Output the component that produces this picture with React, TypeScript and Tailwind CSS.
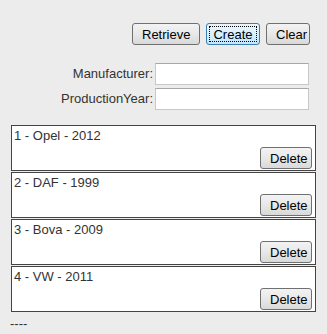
import React from 'react';

const cars = [
  { id: 1, name: 'Opel', year: 2012 },
  { id: 2, name: 'DAF', year: 1999 },
  { id: 3, name: 'Bova', year: 2009 },
  { id: 4, name: 'VW', year: 2011 },
];

const btn =
  'h-[22px] rounded-[3px] border border-[#707070] bg-gradient-to-b from-[#f3f3f3] via-[#e8e8e8] to-[#d9d9d9] px-[9px] text-[13px] leading-none text-black';

const App: React.FC = () => {
  return (
    <div className="w-[327px] h-[334px] bg-[#ececec] font-['Liberation_Sans',Arial,sans-serif] text-[13px] text-[#333]">
      {/* Actions */}
      <div className="flex justify-end gap-[6px] pt-[23px] pr-[17px]">
        <button className={`${btn} w-[68px]`}>Retrieve</button>
        <button className="h-[22px] w-[54px] rounded-[3px] border border-[#3c7fb1] bg-gradient-to-b from-[#eaf6fd] via-[#d9f0fc] to-[#bee6fd] p-[2px] text-[13px] leading-none text-black">
          <span className="flex h-full w-full items-center justify-center border border-dotted border-black">Create</span>
        </button>
        <button className={`${btn} w-[44px]`}>Clear</button>
      </div>

      {/* Form */}
      <div className="mt-[18px] grid grid-cols-[auto_154px] justify-end gap-x-[2px] gap-y-[3px] pr-[18px]">
        <label className="self-center text-right">Manufacturer:</label>
        <input className="h-[22px] border border-[#c8c8c8] border-t-[#a8a8a8] bg-white outline-none" />
        <label className="self-center text-right">ProductionYear:</label>
        <input className="h-[22px] border border-[#c8c8c8] border-t-[#a8a8a8] bg-white outline-none" />
      </div>

      {/* List */}
      <div className="mx-[11px] mt-[15px] flex flex-col gap-[1px]">
        {cars.map((car) => (
          <div key={car.id} className="h-[46px] border border-[#444] bg-white pl-[2px] pr-[3px] pt-[2px]">
            <p className="leading-[16px]">
              {car.id} - {car.name} - {car.year}
            </p>
            <div className="mt-[3px] flex justify-end">
              <button className={`${btn} h-[21px] w-[52px] px-0`}>Delete</button>
            </div>
          </div>
        ))}
      </div>

      <p className="ml-[10px] mt-[4px] leading-[16px]">----</p>
    </div>
  );
};

export default App;
